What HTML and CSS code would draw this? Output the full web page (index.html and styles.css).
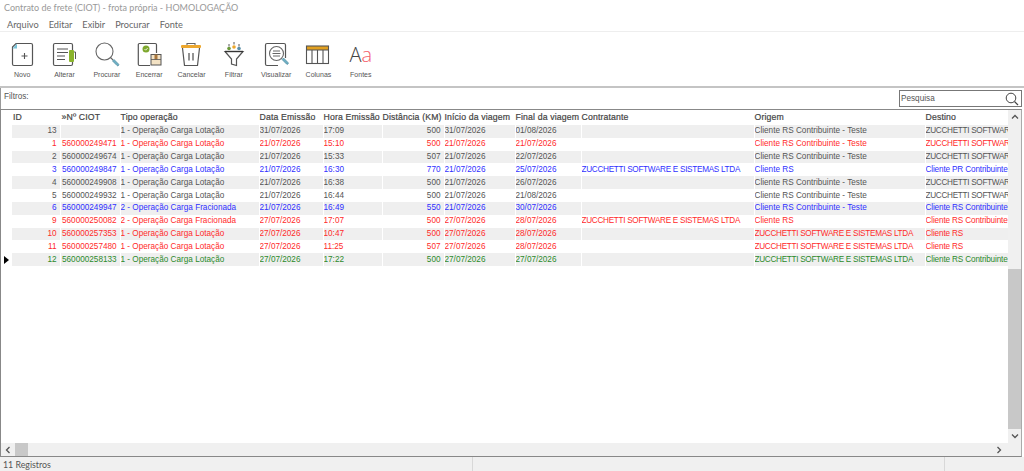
FILE: index.html
```html
<!DOCTYPE html>
<html>
<head>
  <title>Contrato de frete (CIOT)</title>
  <link rel="stylesheet" href="styles.css">
</head>
<body>
  <div class="title-bar">Contrato de frete (CIOT) - frota própria - HOMOLOGAÇÃO</div>

  <div class="menu-bar">
    <span class="menu-item">Arquivo</span>
    <span class="menu-item">Editar</span>
    <span class="menu-item">Exibir</span>
    <span class="menu-item">Procurar</span>
    <span class="menu-item">Fonte</span>
  </div>

  <div class="toolbar">
    <div class="tool">
      <svg class="tool-icon" viewBox="0 0 26 26" fill="none">
        <path d="M7 2.500h15a1.500 1.500 0 0 1 1.500 1.500v19a1.500 1.500 0 0 1-1.500 1.500H5a1.500 1.500 0 0 1-1.500-1.500V6z" stroke="#555" stroke-width="1.200"/>
        <path d="M3.500 7.500 8 2.500v5z" fill="#7cc3d8"/>
        <path d="M15.500 12v6M12.500 15h6" stroke="#555" stroke-width="1.100"/>
      </svg>
      <span>Novo</span>
    </div>
    <div class="tool">
      <svg class="tool-icon" viewBox="0 0 26 26" fill="none">
        <rect x="2.500" y="2.500" width="19" height="22" rx="1.500" stroke="#555" stroke-width="1.200"/>
        <path d="M6 8h11M6 11.500h11M6 15h8M6 18.500h8" stroke="#555" stroke-width="1.100"/>
        <rect x="18" y="9" width="5" height="12" rx="1" fill="#8ab42c"/>
        <path d="M23 11h1.500v7" stroke="#555"/>
      </svg>
      <span>Alterar</span>
    </div>
    <div class="tool">
      <svg class="tool-icon" viewBox="0 0 26 26" fill="none">
        <circle cx="10.500" cy="10.500" r="8.500" stroke="#666" stroke-width="1.100"/>
        <path d="M16.500 16.500 19 19" stroke="#666" stroke-width="1.100"/>
        <path d="M18.500 20 20 18.500l4.500 4.500a1 1 0 0 1-1.500 1.500z" fill="#6fb1c6" stroke="#4d8a9e" stroke-width=".7"/>
      </svg>
      <span>Procurar</span>
    </div>
    <div class="tool">
      <svg class="tool-icon" viewBox="0 0 26 26" fill="none">
        <path d="M14 24.500H3.500a1.200 1.200 0 0 1-1.200-1.200V3.700a1.200 1.200 0 0 1 1.200-1.200h15.800a1.200 1.200 0 0 1 1.200 1.200V12" stroke="#555" stroke-width="1.200"/>
        <circle cx="10" cy="8" r="3.500" fill="#7ea82e"/>
        <path d="m8.500 8 1.200 1.200 2-2.200" stroke="#fff" stroke-width=".8"/>
        <rect x="15" y="13.500" width="10" height="10.500" fill="#f3e2c4" stroke="#555"/>
        <rect x="18.500" y="13.500" width="3" height="5" fill="#a9773c"/>
        <path d="M15 18.500h10" stroke="#555" stroke-width=".8"/>
      </svg>
      <span>Encerrar</span>
    </div>
    <div class="tool">
      <svg class="tool-icon" viewBox="0 0 26 26" fill="none">
        <path d="M9 4V2.500h8V4" stroke="#666" stroke-width="1.100"/>
        <path d="M4.500 7 6.500 24.500h13L21.500 7" stroke="#555" stroke-width="1.200"/>
        <rect x="3" y="4" width="20" height="3" rx="1" fill="#eda72e"/>
        <path d="M11 12v7.500M15 12v7.500" stroke="#666" stroke-width="1.400"/>
      </svg>
      <span>Cancelar</span>
    </div>
    <div class="tool">
      <svg class="tool-icon" viewBox="0 0 26 26" fill="none">
        <circle cx="8" cy="7.500" r="1.800" fill="#6b9a3a"/>
        <circle cx="13" cy="6" r="1.800" fill="#eda72e"/>
        <circle cx="18" cy="7.500" r="1.800" fill="#5a8fa8"/>
        <path d="M13 1v2.500M8 3v2.500M18 3v2.500" stroke="#555"/>
        <path d="M4 10.500h18L15.500 18v6.500l-5-1.500v-5z" stroke="#555" stroke-width="1.200"/>
        <path d="M4 10.500h18" stroke="#333" stroke-width="1.400"/>
      </svg>
      <span>Filtrar</span>
    </div>
    <div class="tool">
      <svg class="tool-icon" viewBox="0 0 26 26" fill="none">
        <path d="M15 24.500H4a1.500 1.500 0 0 1-1.500-1.500V4A1.500 1.500 0 0 1 4 2.500h17A1.500 1.500 0 0 1 22.500 4v13" stroke="#555" stroke-width="1.200"/>
        <circle cx="13.500" cy="12.500" r="7" fill="#fff" stroke="#666" stroke-width="1.100"/>
        <path d="M10 10h7M9.500 12.500h8M10 15h7" stroke="#666"/>
        <path d="M19 18.500 20.500 17l4.500 4.500a1 1 0 0 1-1.500 1.500z" fill="#6fb1c6" stroke="#4d8a9e" stroke-width=".7"/>
      </svg>
      <span>Visualizar</span>
    </div>
    <div class="tool">
      <svg class="tool-icon" viewBox="0 0 26 26" fill="none">
        <rect x="1.500" y="5" width="22" height="4" fill="#e2a020"/>
        <rect x="1.500" y="5" width="22" height="17.500" stroke="#555" stroke-width="1.100"/>
        <path d="M7 9v13.500M12.500 9v13.500M18 9v13.500M1.500 9h22" stroke="#555" stroke-width="1.100"/>
      </svg>
      <span>Colunas</span>
    </div>
    <div class="tool">
      <div class="font-icon">A<span class="font-icon-a">a</span></div>
      <span>Fontes</span>
    </div>
  </div>

  <div class="filter-bar">
    <span class="filter-label">Filtros:</span>
    <div class="search-box">
      <span>Pesquisa</span>
      <svg class="search-icon" viewBox="0 0 14 14" fill="none">
        <circle cx="6" cy="6" r="4.800" stroke="#444"/>
        <path d="m9.500 9.500 3.500 3.500" stroke="#444" stroke-width="1.200"/>
      </svg>
    </div>
  </div>

  <div class="grid-frame">
    <div class="grid-body">
      <div class="grid-area">
        <table class="grid">
          <colgroup>
            <col class="c-mark"><col class="c-id"><col class="c-ciot"><col class="c-tipo"><col class="c-data"><col class="c-hora">
            <col class="c-dist"><col class="c-ini"><col class="c-fim"><col class="c-contr"><col class="c-orig"><col class="c-dest">
          </colgroup>
          <thead>
            <tr>
              <th></th><th>ID</th><th>»Nº CIOT</th><th>Tipo operação</th><th>Data Emissão</th><th>Hora Emissão</th>
              <th>Distância (KM)</th><th>Início da viagem</th><th>Final da viagem</th><th>Contratante</th><th>Origem</th><th>Destino</th>
            </tr>
          </thead>
          <tbody>
            <tr class="gray">
              <td class="mark"></td><td class="num">13</td><td></td><td>1 - Operação Carga Lotação</td><td>31/07/2026</td><td>17:09</td>
              <td class="num">500</td><td>31/07/2026</td><td>01/08/2026</td><td></td><td>Cliente RS Contribuinte - Teste</td><td class="firm">ZUCCHETTI SOFTWARE E SISTEMAS LTDA</td>
            </tr>
            <tr class="red">
              <td class="mark"></td><td class="num">1</td><td>560000249471</td><td>1 - Operação Carga Lotação</td><td>21/07/2026</td><td>15:10</td>
              <td class="num">500</td><td>21/07/2026</td><td>21/07/2026</td><td></td><td>Cliente RS Contribuinte - Teste</td><td class="firm">ZUCCHETTI SOFTWARE E SISTEMAS LTDA</td>
            </tr>
            <tr class="gray">
              <td class="mark"></td><td class="num">2</td><td>560000249674</td><td>1 - Operação Carga Lotação</td><td>21/07/2026</td><td>15:33</td>
              <td class="num">507</td><td>21/07/2026</td><td>22/07/2026</td><td></td><td>Cliente RS Contribuinte - Teste</td><td class="firm">ZUCCHETTI SOFTWARE E SISTEMAS LTDA</td>
            </tr>
            <tr class="blue">
              <td class="mark"></td><td class="num">3</td><td>560000249847</td><td>1 - Operação Carga Lotação</td><td>21/07/2026</td><td>16:30</td>
              <td class="num">770</td><td>21/07/2026</td><td>25/07/2026</td><td class="firm">ZUCCHETTI SOFTWARE E SISTEMAS LTDA</td><td>Cliente RS</td><td>Cliente PR Contribuinte</td>
            </tr>
            <tr class="gray">
              <td class="mark"></td><td class="num">4</td><td>560000249908</td><td>1 - Operação Carga Lotação</td><td>21/07/2026</td><td>16:38</td>
              <td class="num">500</td><td>21/07/2026</td><td>26/07/2026</td><td></td><td>Cliente RS Contribuinte - Teste</td><td class="firm">ZUCCHETTI SOFTWARE E SISTEMAS LTDA</td>
            </tr>
            <tr class="gray">
              <td class="mark"></td><td class="num">5</td><td>560000249932</td><td>1 - Operação Carga Lotação</td><td>21/07/2026</td><td>16:44</td>
              <td class="num">500</td><td>21/07/2026</td><td>21/08/2026</td><td></td><td>Cliente RS Contribuinte - Teste</td><td class="firm">ZUCCHETTI SOFTWARE E SISTEMAS LTDA</td>
            </tr>
            <tr class="blue">
              <td class="mark"></td><td class="num">6</td><td>560000249947</td><td>2 - Operação Carga Fracionada</td><td>21/07/2026</td><td>16:49</td>
              <td class="num">550</td><td>21/07/2026</td><td>30/07/2026</td><td></td><td>Cliente RS Contribuinte - Teste</td><td>Cliente RS Contribuinte</td>
            </tr>
            <tr class="red">
              <td class="mark"></td><td class="num">9</td><td>560000250082</td><td>2 - Operação Carga Fracionada</td><td>27/07/2026</td><td>17:07</td>
              <td class="num">500</td><td>27/07/2026</td><td>28/07/2026</td><td class="firm">ZUCCHETTI SOFTWARE E SISTEMAS LTDA</td><td>Cliente RS</td><td>Cliente RS Contribuinte</td>
            </tr>
            <tr class="red">
              <td class="mark"></td><td class="num">10</td><td>560000257353</td><td>1 - Operação Carga Lotação</td><td>27/07/2026</td><td>10:47</td>
              <td class="num">500</td><td>27/07/2026</td><td>28/07/2026</td><td></td><td class="firm">ZUCCHETTI SOFTWARE E SISTEMAS LTDA</td><td>Cliente RS</td>
            </tr>
            <tr class="red">
              <td class="mark"></td><td class="num">11</td><td>560000257480</td><td>1 - Operação Carga Lotação</td><td>27/07/2026</td><td>11:25</td>
              <td class="num">507</td><td>27/07/2026</td><td>28/07/2026</td><td></td><td class="firm">ZUCCHETTI SOFTWARE E SISTEMAS LTDA</td><td>Cliente RS</td>
            </tr>
            <tr class="green">
              <td class="mark"><span class="row-arrow"></span></td><td class="num">12</td><td>560000258133</td><td>1 - Operação Carga Lotação</td><td>27/07/2026</td><td>17:22</td>
              <td class="num">500</td><td>27/07/2026</td><td>27/07/2026</td><td></td><td class="firm">ZUCCHETTI SOFTWARE E SISTEMAS LTDA</td><td>Cliente RS Contribuinte</td>
            </tr>
          </tbody>
        </table>
      </div>
      <div class="vscroll">
        <svg class="arrow" viewBox="0 0 8 6" fill="none"><path d="m1 4.500 3-3 3 3" stroke="#555" stroke-width="1.300"/></svg>
        <div class="vscroll-gap"></div>
        <div class="vscroll-thumb"></div>
        <svg class="arrow" viewBox="0 0 8 6" fill="none"><path d="m1 1.500 3 3 3-3" stroke="#555" stroke-width="1.300"/></svg>
      </div>
    </div>
    <div class="hscroll">
      <svg class="arrow-h" viewBox="0 0 6 8" fill="none"><path d="m4.500 1-3 3 3 3" stroke="#555" stroke-width="1.300"/></svg>
      <div class="hscroll-thumb"></div>
      <div class="hscroll-gap"></div>
      <svg class="arrow-h" viewBox="0 0 6 8" fill="none"><path d="m1.500 1 3 3-3 3" stroke="#555" stroke-width="1.300"/></svg>
      <div class="corner"></div>
    </div>
  </div>

  <div class="status-bar">
    <span class="status-cell status-main">11 Registros</span>
    <span class="status-cell status-mid"></span>
    <span class="status-cell"></span>
  </div>
</body>
</html>
```

FILE: styles.css
```css
html, body {
  height: 100%;
}
body {
  display: flex;
  flex-direction: column;
  height: 471px;
  margin: 0;
  overflow: hidden;
  font-family: Lato, "Open Sans", sans-serif;
  background-color: #fff;
}

.title-bar {
  height: 14px;
  padding-left: 4px;
  font-size: 9px;
  line-height: 15px;
  color: #999;
}

.menu-bar {
  display: flex;
  gap: 10px;
  height: 18px;
  padding-left: 7px;
  font-size: 9.200px;
  line-height: 22px;
  color: #666;
  border-bottom: 1px solid #eee;
  box-sizing: border-box;
}

.toolbar {
  display: flex;
  height: 56px;
  padding-left: 1px;
  border-bottom: 2px solid #c4c4c4;
  box-sizing: border-box;
}
.tool {
  display: flex;
  flex-direction: column;
  align-items: center;
  width: 42.33px;
  padding-top: 9px;
  font-family: "Liberation Sans", sans-serif;
  font-size: 7px;
  color: #555;
}
.tool-icon {
  width: 26px;
  height: 26px;
  margin-bottom: 4px;
}
.font-icon {
  height: 26px;
  margin-bottom: 4px;
  font-family: "Open Sans", sans-serif;
  font-weight: 300;
  font-size: 20px;
  line-height: 27px;
  color: #444;
}
.font-icon-a {
  color: #f4606c;
}

.filter-bar {
  display: flex;
  justify-content: space-between;
  align-items: flex-start;
  height: 21px;
  padding: 2px 2px 0 3px;
  border-left: 1px solid #999;
  box-sizing: border-box;
  font-family: "Liberation Sans", sans-serif;
  font-size: 8.200px;
  color: #555;
}
.filter-label {
  margin-top: 1px;
  line-height: 11px;
}
.search-box {
  display: flex;
  justify-content: space-between;
  align-items: center;
  width: 123px;
  height: 17px;
  padding: 0 2px 0 1px;
  border: 1px solid #777;
  box-sizing: border-box;
}
.search-icon {
  width: 14px;
  height: 14px;
}

.grid-frame {
  flex: 1;
  display: flex;
  flex-direction: column;
  min-height: 0;
  margin-right: 2px;
  border: 1px solid #888;
  border-right-color: #aaa;
}
.grid-body {
  flex: 1;
  display: flex;
  min-height: 0;
}
.grid-area {
  flex: 1;
  overflow: hidden;
}

.grid {
  table-layout: fixed;
  width: 1008px;
  border-collapse: collapse;
  font-family: "Liberation Sans", sans-serif;
  font-size: 8.200px;
}
.c-mark { width: 10px; }
.c-id { width: 49px; }
.c-ciot { width: 60px; }
.c-tipo { width: 139px; }
.c-data { width: 64px; }
.c-hora { width: 59px; }
.c-dist { width: 62px; }
.c-ini { width: 71px; }
.c-fim { width: 66px; }
.c-contr { width: 173px; }
.c-orig { width: 171px; }
.c-dest { width: 84px; }

.grid th {
  height: 14px;
  padding: 0 0 1px 0.5px;
  font-size: 8.700px;
  font-weight: normal;
  letter-spacing: 0.15px;
  text-align: left;
  color: #444;
  white-space: nowrap;
  overflow: hidden;
  -webkit-text-stroke: 0.2px #444;
}
.grid th:nth-child(2) {
  padding-left: 2px;
}
.grid th:nth-child(3),
.grid td:nth-child(3) {
  padding-left: 1.500px;
}
.grid td {
  height: 12.830px;
  padding: 0;
  line-height: 12px;
  white-space: nowrap;
  overflow: hidden;
  border-left: 1px solid #fff;
}
.grid tbody tr:nth-child(odd) td {
  background-color: #efefef;
}
.grid td.mark,
.grid tbody tr:nth-child(odd) td.mark {
  background-color: #fff;
  border-left: none;
}
.grid .num {
  padding-right: 3px;
  text-align: right;
}
.grid td:last-child {
  letter-spacing: -0.15px;
}
.grid .firm,
.grid td.firm:last-child {
  letter-spacing: -0.3px;
}
.gray td { color: #555; }
.red td { color: #ff2a2a; }
.blue td { color: #2f2fff; }
.green td { color: #2b8a2b; }

.row-arrow {
  display: block;
  width: 0;
  height: 0;
  margin-left: 3px;
  border-top: 4px solid transparent;
  border-bottom: 4px solid transparent;
  border-left: 5px solid #000;
}

.vscroll {
  display: flex;
  flex-direction: column;
  align-items: center;
  width: 13px;
  background-color: #f0f0f0;
}
.arrow {
  width: 8px;
  height: 6px;
  margin: 4px 0;
}
.vscroll-gap {
  height: 145px;
}
.vscroll-thumb {
  flex: 1;
  width: 100%;
  background-color: #c8c8c8;
}

.hscroll {
  display: flex;
  align-items: center;
  height: 13px;
  background-color: #f0f0f0;
}
.arrow-h {
  width: 6px;
  height: 8px;
  margin: 0 4px 0 4px;
}
.hscroll-thumb {
  width: 13px;
  height: 100%;
  background-color: #c8c8c8;
}
.hscroll-gap {
  flex: 1;
}
.corner {
  width: 15px;
}

.status-bar {
  display: flex;
  height: 14px;
  background-color: #f0f0f0;
  font-size: 8.800px;
  line-height: 15px;
  color: #555;
}
.status-cell {
  flex: 1;
  padding-left: 3px;
}
.status-main {
  flex: 0 0 469px;
  border-right: 1px solid #d8d8d8;
}
.status-mid {
  flex: 0 0 468px;
  border-right: 1px solid #d8d8d8;
}
```
